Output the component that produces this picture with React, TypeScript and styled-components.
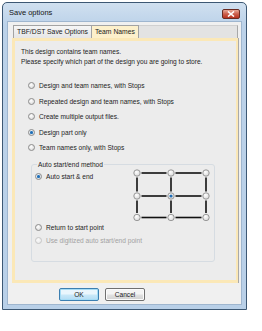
import React from "react";
import styled, { createGlobalStyle } from "styled-components";

const GlobalStyle = createGlobalStyle`
  html, body {
    margin: 0;
    padding: 0;
    background: #fff;
  }
  body {
    font-family: "Liberation Sans", Arial, sans-serif;
    font-size: 7px;
    color: #1c1c1c;
  }
`;

const options = [
  { label: "Design and team names, with Stops", checked: false },
  { label: "Repeated design and team names, with Stops", checked: false },
  { label: "Create multiple output files.", checked: false },
  { label: "Design part only", checked: true },
  { label: "Team names only, with Stops", checked: false },
];

type RadioProps = {
  $checked?: boolean;
  $disabled?: boolean;
};

const Radio: React.FC<{ label: string; checked?: boolean; disabled?: boolean }> = ({
  label,
  checked,
  disabled,
}) => (
  <RadioRow $disabled={disabled}>
    <RadioDot $checked={checked} $disabled={disabled} />
    <span>{label}</span>
  </RadioRow>
);

// 3x3 start/end point picker
const cols = [4, 38, 73];
const rows = [4, 27, 48.5];

const PointGrid: FC = () => (
  <GridSvg width={78} height={52} viewBox="0 0 78 52">
    <defs>
      <radialGradient id="rg" cx="40%" cy="35%" r="70%">
        <stop offset="0" stopColor="#ffffff" />
        <stop offset="1" stopColor="#d6d6d6" />
      </radialGradient>
    </defs>
    {rows.map((y) =>
      [0, 1].map((i) => (
        <line
          key={`h${y}${i}`}
          x1={cols[i] + 4.5}
          y1={y}
          x2={cols[i + 1] - 4.5}
          y2={y}
          stroke="#111"
          strokeWidth={1.6}
        />
      ))
    )}
    {cols.map((x) =>
      [0, 1].map((i) => (
        <line
          key={`v${x}${i}`}
          x1={x}
          y1={rows[i] + 4.5}
          x2={x}
          y2={rows[i + 1] - 4.5}
          stroke="#111"
          strokeWidth={1.6}
        />
      ))
    )}
    {rows.map((y, ri) =>
      cols.map((x, ci) => (
        <g key={`c${ri}${ci}`}>
          <circle cx={x} cy={y} r={3.2} fill="url(#rg)" stroke="#909090" strokeWidth={0.9} />
          {ri === 1 && ci === 1 && <circle cx={x} cy={y} r={1.6} fill="#1f6db5" />}
        </g>
      ))
    )}
  </GridSvg>
);

type FC<P = {}> = React.FC<P>;

const App: FC = () => {
  return (
    <>
      <GlobalStyle />
      <Window>
        <TitleBar>
          <Title>Save options</Title>
          <CloseBtn aria-label="Close">
            <svg width="8" height="6" viewBox="0 0 8 6">
              <path d="M1 0.5 L7 5.5 M7 0.5 L1 5.5" stroke="#fff" strokeWidth="1.6" />
            </svg>
          </CloseBtn>
        </TitleBar>
        <Client>
          <TabStrip>
            <Tab>TBF/DST Save Options</Tab>
            <Tab $active>Team Names</Tab>
            <TabFiller />
          </TabStrip>
          <Panel>
            <Intro>
              This design contains team names.
              <br />
              Please specify which part of the design you are going to store.
            </Intro>
            <OptionList>
              {options.map((o) => (
                <Radio key={o.label} label={o.label} checked={o.checked} />
              ))}
            </OptionList>
            <GroupBox>
              <Legend>Auto start/end method</Legend>
              <GroupTop>
                <Radio label="Auto start &amp; end" checked />
                <PointGrid />
              </GroupTop>
              <Radio label="Return to start point" />
              <Radio label="Use digitized auto start/end point" disabled />
            </GroupBox>
          </Panel>
          <ButtonRow>
            <Button $default>OK</Button>
            <Button>Cancel</Button>
          </ButtonRow>
        </Client>
      </Window>
    </>
  );
};

const Window = styled.div`
  margin: 2px 0 0 2px;
  width: 245px;
  height: 308px;
  box-sizing: border-box;
  border: 1px solid #3d5874;
  border-radius: 5px 5px 0 0;
  background: linear-gradient(#d0e0f0, #bcd2e9 22px, #b9d0e8);
  padding: 0 5px 5px 5px;
  display: flex;
  flex-direction: column;
`;

const TitleBar = styled.div`
  height: 19px;
  display: flex;
  justify-content: space-between;
  align-items: flex-start;
`;

const Title = styled.span`
  margin-left: 1px;
  line-height: 19px;
  font-size: 7.5px;
  color: #151515;
`;

const CloseBtn = styled.div`
  margin-top: 6px;
  margin-right: 1px;
  width: 18px;
  height: 10px;
  box-sizing: border-box;
  border: 1px solid #6a2b22;
  border-radius: 2px;
  background: linear-gradient(#e8a897, #cc5e4b 50%, #b8321f);
  display: flex;
  align-items: center;
  justify-content: center;
`;

const Client = styled.div`
  flex: 1;
  background: #f0f0f0;
  box-shadow: 0 0 0 1px #9fb6cf;
  padding: 3px 3px 0 4px;
  display: flex;
  flex-direction: column;
`;

const TabStrip = styled.div`
  height: 13px;
  display: flex;
  padding-left: 1px;
`;

const Tab = styled.div<{ $active?: boolean }>`
  height: 13px;
  box-sizing: border-box;
  padding: 0 3px;
  line-height: 12px;
  font-size: 6.8px;
  border: 1px solid #a3a3a3;
  border-bottom: none;
  margin-left: ${(p) => (p.$active ? "-1px" : "0")};
  background: ${(p) =>
    p.$active ? "#fdf0cb" : "linear-gradient(#f6f6f6, #e6e6e6)"};
  color: #1a1a1a;
`;

const TabFiller = styled.div`
  flex: 1;
  background: #e3e3e3;
  border-top: 1px solid #d0d0d0;
  border-right: 1px solid #a8a8a8;
`;

const Panel = styled.div`
  height: 245px;
  box-sizing: border-box;
  background: #ececec;
  border: 3px solid #fbe8b7;
  border-right-width: 2px;
  box-shadow: 1px 0 0 #a9a9a9;
  padding: 6px 0 0 6px;
  display: flex;
  flex-direction: column;
`;

const Intro = styled.div`
  line-height: 10px;
  font-size: 6.6px;
`;

const OptionList = styled.div`
  margin-top: 11px;
  padding-left: 7px;
  display: flex;
  flex-direction: column;
`;

const RadioRow = styled.div<RadioProps>`
  height: 15.5px;
  display: flex;
  align-items: center;
  gap: 4px;
  font-size: 6.6px;
  color: ${(p) => (p.$disabled ? "#a2a2a2" : "#1c1c1c")};

  fieldset & {
    height: 13px;
  }
`;

const RadioDot = styled.span<RadioProps>`
  width: 7px;
  height: 7px;
  flex: none;
  box-sizing: border-box;
  border-radius: 50%;
  border: 1px solid ${(p) => (p.$disabled ? "#c6c6c6" : "#8c8c8c")};
  background: ${(p) =>
    p.$disabled
      ? "radial-gradient(circle at 40% 35%, #fafafa, #e6e6e6)"
      : "radial-gradient(circle at 40% 35%, #ffffff, #d3d3d3)"};
  display: flex;
  align-items: center;
  justify-content: center;

  &::after {
    content: "";
    width: 3px;
    height: 3px;
    border-radius: 50%;
    background: #1f6db5;
    box-shadow: 0 0 1px #5ea7e6;
    display: ${(p) => (p.$checked ? "block" : "none")};
  }
`;

const GroupBox = styled.fieldset`
  margin: 4px 0 0 10px;
  width: 184px;
  box-sizing: border-box;
  border: 1px solid #d6dce2;
  border-radius: 3px;
  padding: 0 0 14px 3px;
`;

const Legend = styled.legend`
  margin-left: 2px;
  padding: 0 1px;
  line-height: 9px;
  font-size: 6.6px;
`;

const GroupTop = styled.div`
  height: 52px;
  display: flex;
  align-items: flex-start;
  justify-content: space-between;
  padding-right: 3px;

  & > div {
    margin-top: 1px;
  }
`;

const GridSvg = styled.svg`
  display: block;
`;

const ButtonRow = styled.div`
  margin-top: 5px;
  padding-left: 47px;
  display: flex;
  gap: 6px;
`;

const Button = styled.button<{ $default?: boolean }>`
  width: 40px;
  height: 13px;
  padding: 0;
  box-sizing: border-box;
  border-radius: 2px;
  font-family: "Liberation Sans", Arial, sans-serif;
  font-size: 6.6px;
  color: #1a1a1a;
  border: 1px solid ${(p) => (p.$default ? "#3c7fb1" : "#707070")};
  background: ${(p) =>
    p.$default
      ? "linear-gradient(#eaf6fd 45%, #c9e8f8 55%, #b3dcf4)"
      : "linear-gradient(#f4f4f4 45%, #e0e0e0 55%, #d2d2d2)"};
  box-shadow: inset 0 0 0 1px ${(p) => (p.$default ? "#a6dcf5" : "#fbfbfb")};
`;

export default App;
